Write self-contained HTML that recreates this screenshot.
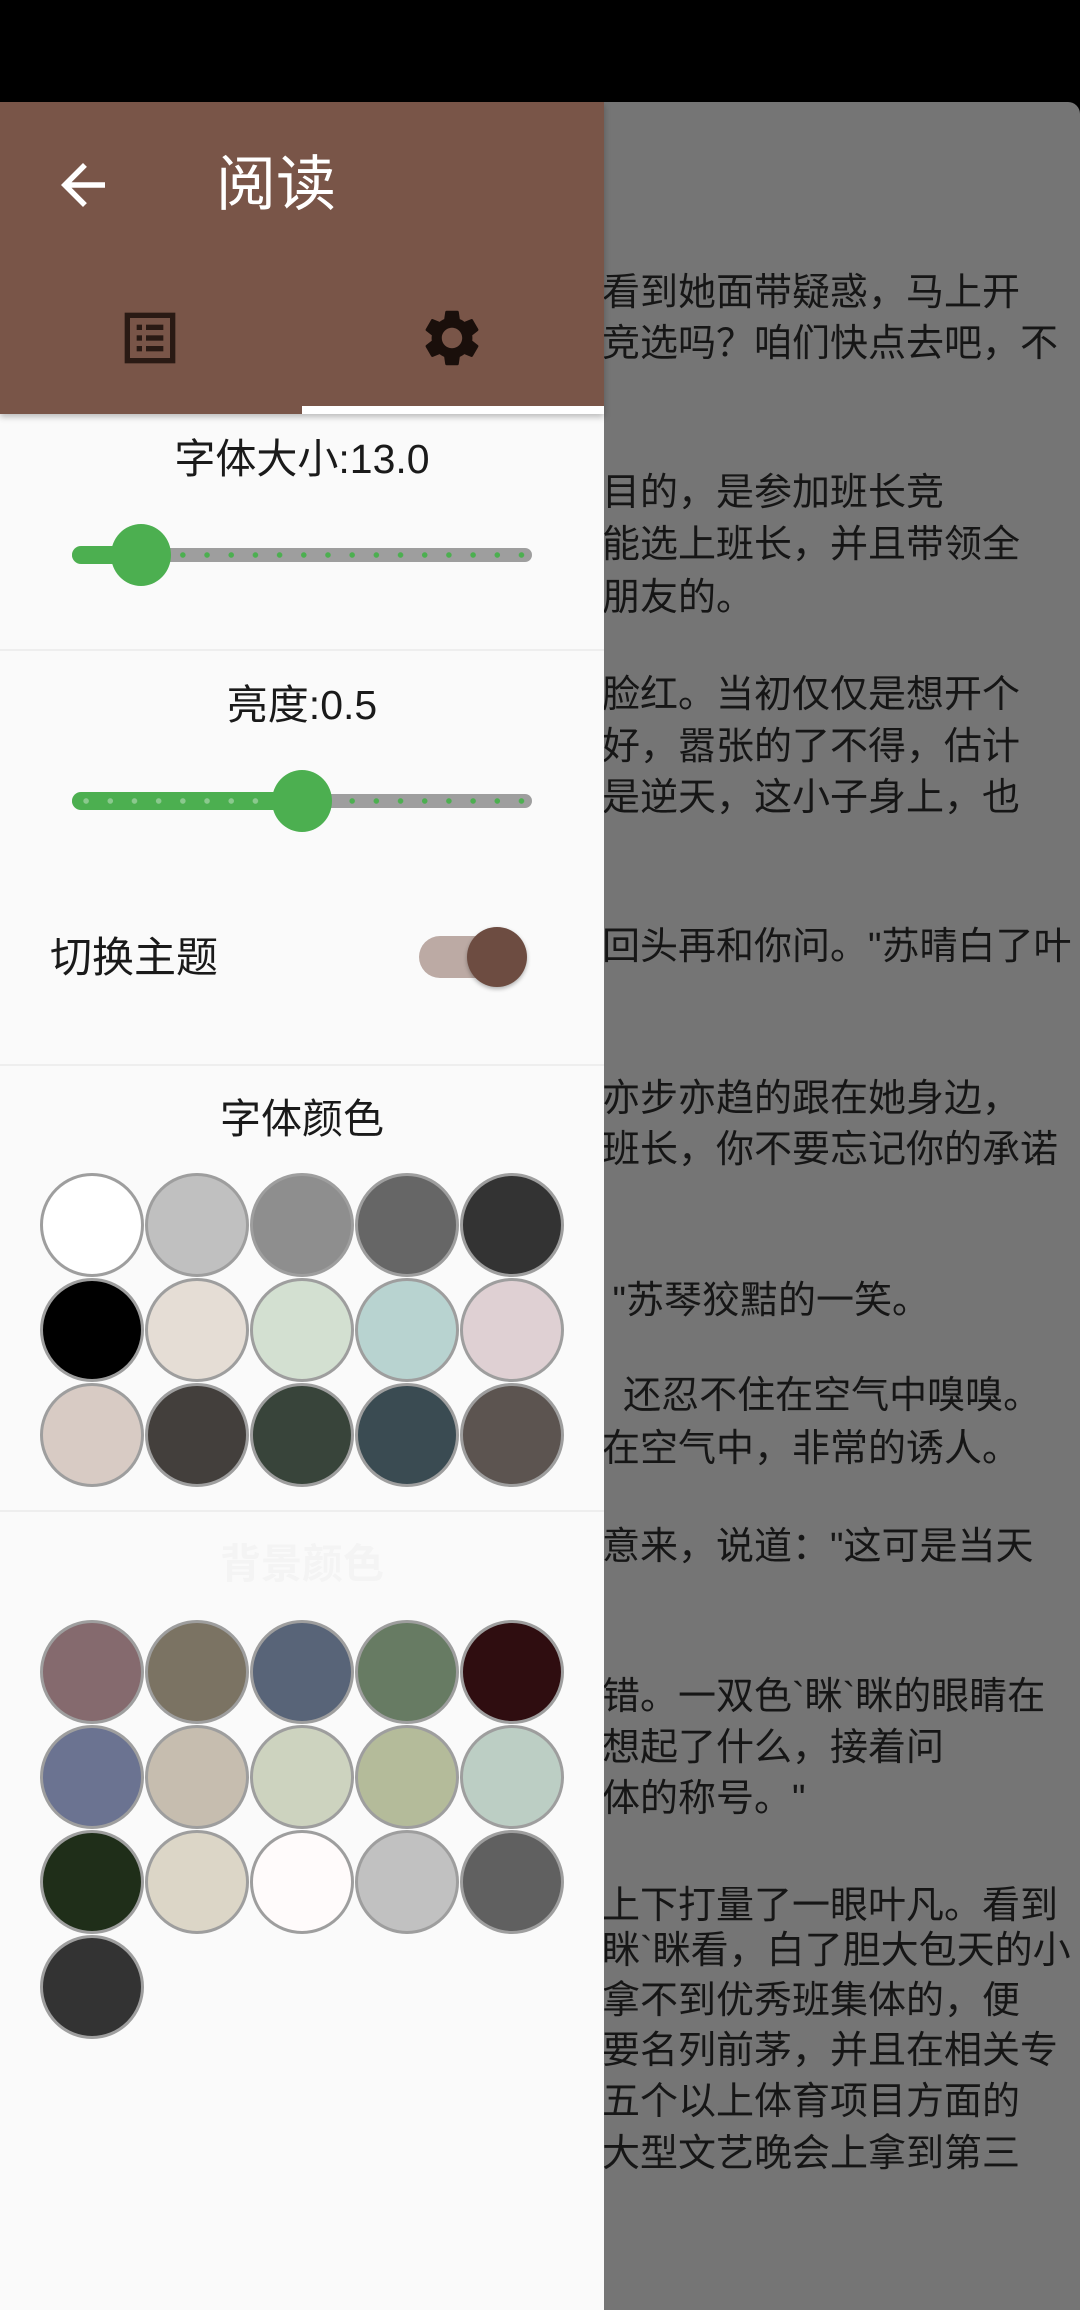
<!DOCTYPE html>
<html><head><meta charset="utf-8"><style>
*{margin:0;padding:0;box-sizing:border-box}
body{width:1080px;height:2310px;background:#000;position:relative;overflow:hidden;font-family:"Liberation Sans","Noto Sans CJK SC",sans-serif}
.ov{position:absolute;left:0;top:102px;width:1080px;height:2208px;background:#757575;border-top-right-radius:12px}
.ln{position:absolute;left:602px;font-size:38px;color:#161616;white-space:nowrap;line-height:42px}
.dr{position:absolute;left:0;top:102px;width:604px;height:2208px;background:#fafafa}
.hd{position:absolute;left:0;top:0;width:604px;height:312px;background:#795548;box-shadow:0 3px 6px rgba(0,0,0,.25)}
.ind{position:absolute;left:302px;top:304px;width:302px;height:8px;background:#fff}
.t{position:absolute;left:0;width:604px;text-align:center;color:#1a1a1a;font-size:41px;line-height:46px}
.div{position:absolute;left:0;width:604px;height:2px;background:#eee}
.tr{position:absolute;height:14px;border-radius:7px;background-image:radial-gradient(circle,#4caf50 2.5px,transparent 3px);background-size:24.2px 14px;background-position:2px 0}
.th{position:absolute;width:60px;height:62px;border-radius:50%;background:#4caf50}
.c{position:absolute;width:104px;height:104px;border-radius:50%;border:3px solid #9e9e9e}
</style></head><body>
<div class="ov">
<div class="ln" style="top:170px">看到她面带疑惑，马上开</div>
<div class="ln" style="top:221px">竞选吗？咱们快点去吧，不</div>
<div class="ln" style="top:370px">目的，是参加班长竞</div>
<div class="ln" style="top:422px">能选上班长，并且带领全</div>
<div class="ln" style="top:475px">朋友的。</div>
<div class="ln" style="top:572px">脸红。当初仅仅是想开个</div>
<div class="ln" style="top:624px">好，嚣张的了不得，估计</div>
<div class="ln" style="top:675px">是逆天，这小子身上，也</div>
<div class="ln" style="top:824px">回头再和你问。"苏晴白了叶</div>
<div class="ln" style="top:976px">亦步亦趋的跟在她身边，</div>
<div class="ln" style="top:1027px">班长，你不要忘记你的承诺</div>
<div class="ln" style="top:1178px">&nbsp;"苏琴狡黠的一笑。</div>
<div class="ln" style="top:1273px">&nbsp;&nbsp;还忍不住在空气中嗅嗅。</div>
<div class="ln" style="top:1326px">在空气中，非常的诱人。</div>
<div class="ln" style="top:1424px">意来，说道："这可是当天</div>
<div class="ln" style="top:1574px">错。一双色`眯`眯的眼睛在</div>
<div class="ln" style="top:1625px">想起了什么，接着问</div>
<div class="ln" style="top:1676px">体的称号。"</div>
<div class="ln" style="top:1783px">上下打量了一眼叶凡。看到</div>
<div class="ln" style="top:1828px">眯`眯看，白了胆大包天的小</div>
<div class="ln" style="top:1878px">拿不到优秀班集体的，便</div>
<div class="ln" style="top:1928px">要名列前茅，并且在相关专</div>
<div class="ln" style="top:1979px">五个以上体育项目方面的</div>
<div class="ln" style="top:2031px">大型文艺晚会上拿到第三</div>
</div>
<div class="dr">
<div class="hd">
<svg style="position:absolute;left:50px;top:50px" width="66" height="66" viewBox="0 0 24 24"><path d="M20 11H7.830l5.59-5.59L12 4l-8 8 8 8 1.41-1.41L7.83 13H20v-2z" fill="#fff"/></svg>
<div style="position:absolute;left:216px;top:48px;font-size:60px;color:#fff;line-height:70px">阅读</div>
<svg style="position:absolute;left:118px;top:204px" width="64" height="64" viewBox="0 0 24 24"><rect x="3.5" y="3.5" width="17" height="17" fill="none" stroke="#2a1a14" stroke-width="2"/><rect x="7" y="7" width="2" height="2" fill="#2a1a14"/><rect x="10.5" y="7" width="6.5" height="2" fill="#2a1a14"/><rect x="7" y="11" width="2" height="2" fill="#2a1a14"/><rect x="10.5" y="11" width="6.5" height="2" fill="#2a1a14"/><rect x="7" y="15" width="2" height="2" fill="#2a1a14"/><rect x="10.5" y="15" width="6.5" height="2" fill="#2a1a14"/></svg>
<svg style="position:absolute;left:418px;top:202px" width="68" height="68" viewBox="0 0 24 24"><path fill="#1a0f0b" d="M19.14 12.94c.04-.3.06-.61.06-.94 0-.32-.02-.64-.07-.94l2.03-1.58a.49.49 0 0 0 .12-.61l-1.92-3.32a.488.488 0 0 0-.59-.22l-2.39.96c-.5-.38-1.03-.7-1.62-.94l-.36-2.54a.484.484 0 0 0-.48-.41h-3.84c-.24 0-.43.17-.47.41l-.36 2.54c-.59.24-1.13.57-1.62.94l-2.39-.96c-.22-.08-.47 0-.59.22L2.74 8.87c-.12.21-.08.47.12.61l2.03 1.58c-.05.3-.09.63-.09.94s.02.64.07.94l-2.03 1.58a.49.49 0 0 0-.12.61l1.92 3.32c.12.22.37.29.59.22l2.39-.96c.5.38 1.03.7 1.62.94l.36 2.54c.05.24.24.41.48.41h3.84c.24 0 .44-.17.47-.41l.36-2.54c.59-.24 1.13-.56 1.62-.94l2.39.96c.22.08.47 0 .59-.22l1.92-3.32c.12-.22.07-.47-.12-.61l-2.01-1.58zM12 15.6c-1.98 0-3.6-1.62-3.6-3.6s1.62-3.6 3.6-3.6 3.6 1.62 3.6 3.6-1.62 3.6-3.6 3.6z"/></svg>
<div class="ind"></div>
</div>
<div class="t" style="top:334px">字体大小:13.0</div>
<div class="tr" style="left:72px;top:446px;width:460px;background-color:#9e9e9e"></div>
<div class="tr" style="left:72px;top:444px;width:70px;height:18px;border-radius:9px;background:#4caf50"></div>
<div class="th" style="left:111px;top:422px"></div>
<div class="div" style="top:547px"></div>
<div class="t" style="top:580px">亮度:0.5</div>
<div class="tr" style="left:72px;top:692px;width:460px;background-color:#9e9e9e"></div>
<div class="tr" style="left:72px;top:690px;width:230px;height:18px;border-radius:9px;background-color:#4caf50;background-image:radial-gradient(circle,#8bc98e 2.5px,transparent 3px);background-size:24.2px 18px"></div>
<div class="th" style="left:272px;top:668px"></div>
<div style="position:absolute;left:50px;top:832px;font-size:42px;color:#1a1a1a;line-height:48px">切换主题</div>
<div style="position:absolute;left:419px;top:834px;width:84px;height:42px;border-radius:21px;background:#bcaaa4"></div>
<div style="position:absolute;left:467px;top:825px;width:60px;height:60px;border-radius:50%;background:#6d4c41;box-shadow:0 2px 4px rgba(0,0,0,.3)"></div>
<div class="div" style="top:962px"></div>
<div class="t" style="top:994px">字体颜色</div>
<div class="div" style="top:1408px"></div>
<div class="t" style="top:1439px;color:#f4f4f4;font-weight:bold">背景颜色</div>
<div id="g"></div>
</div>
<script>
var cols=[["#ffffff","#c0c0c0","#8e8e8e","#666666","#333333"],["#000000","#e5ddd5","#d3e0d1","#b8d3d0","#dfd0d3"],["#d8cbc4","#433f3c","#38443a","#3a4b52","#5c5450"]];
var bg=[["#856a6e","#7b7363","#586478","#677b63","#2f0d10"],["#6b7391","#c6bdaf","#cdd3bf","#b4bb9a","#bccec4"],["#1f2e19","#dcd6c7","#fffbfb","#c1c1c1","#606060"],["#333333"]];
var xs=[92,197,302,407,512],h="";
function put(a,y0){a.forEach(function(r,i){r.forEach(function(c,j){h+='<div class="c" style="left:'+(xs[j]-52)+'px;top:'+(y0+i*105-52)+'px;background:'+c+'"></div>';});});}
put(cols,1123);put(bg,1570);
document.getElementById("g").innerHTML=h;
</script>
</body></html>
